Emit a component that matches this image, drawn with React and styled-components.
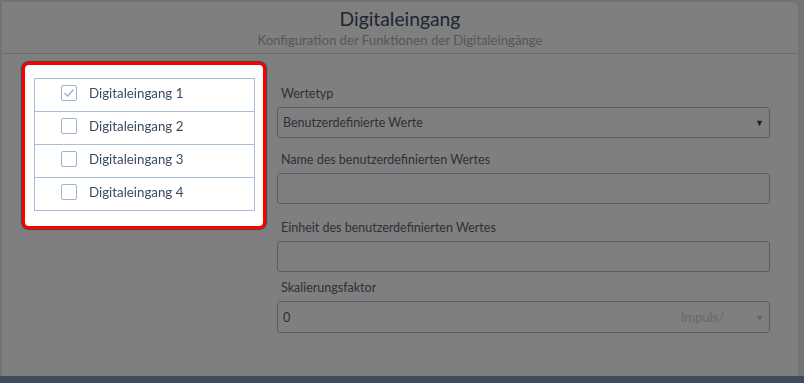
import styled, { createGlobalStyle } from "styled-components"

const GlobalStyle = createGlobalStyle`
    html, body {
        margin: 0;
        padding: 0;
        background: #e6e6e6;
        font-family: Lato, "Open Sans", sans-serif;
    }
    * { box-sizing: border-box; }
`

const inputs = [
    { label: "Digitaleingang 1", checked: true },
    { label: "Digitaleingang 2", checked: false },
    { label: "Digitaleingang 3", checked: false },
    { label: "Digitaleingang 4", checked: false },
]

const Check = () => (
    <svg width="12" height="10" viewBox="0 0 12 10">
        <path d="M1.5 5.2 L4.6 8.2 L10.5 1.6" fill="none" stroke="#8ba6c9" strokeWidth="1.2" />
    </svg>
)

const App = () => {
    return (
        <>
            <GlobalStyle />
            <Page>
                <Frame>
                    <Panel>
                        <Header>
                            <Title>Digitaleingang</Title>
                            <Subtitle>Konfiguration der Funktionen der Digitaleingänge</Subtitle>
                        </Header>
                        <Body>
                            <Highlight>
                                <List>
                                    {inputs.map((item) => (
                                        <Row key={item.label}>
                                            <Box>{item.checked && <Check />}</Box>
                                            <RowLabel>{item.label}</RowLabel>
                                        </Row>
                                    ))}
                                </List>
                            </Highlight>
                            <Form>
                                <Field space={13}>
                                    <Label>Wertetyp</Label>
                                    <Select>
                                        <span>Benutzerdefinierte Werte</span>
                                        <Arrow>▼</Arrow>
                                    </Select>
                                </Field>
                                <Field space={15}>
                                    <Label>Name des benutzerdefinierten Wertes</Label>
                                    <Input />
                                </Field>
                                <Field space={7}>
                                    <Label>Einheit des benutzerdefinierten Wertes</Label>
                                    <Input />
                                </Field>
                                <Field space={0}>
                                    <Label>Skalierungsfaktor</Label>
                                    <Select tall>
                                        <span>0</span>
                                        <Unit>
                                            <UnitText>Impuls/</UnitText>
                                            <Arrow light>▼</Arrow>
                                        </Unit>
                                    </Select>
                                </Field>
                            </Form>
                        </Body>
                    </Panel>
                </Frame>
                <Footer />
                <Overlay />
            </Page>
        </>
    )
}

export default App

const Page = styled.div`
    height: 383px;
    display: flex;
    flex-direction: column;
    overflow: hidden;
`

const Frame = styled.div`
    flex: 1;
    padding: 2px 6px 0 2px;
    display: flex;
`

const Panel = styled.div`
    flex: 1;
    background: #ffffff;
    border-radius: 0 6px 0 0;
    display: flex;
    flex-direction: column;
`

const Header = styled.div`
    height: 52px;
    border-bottom: 1px solid #d8d8d8;
    padding-top: 6px;
    text-align: center;
`

const Title = styled.div`
    font-size: 19.3px;
    line-height: 22px;
    color: #3d4f66;
`

const Subtitle = styled.div`
    margin-top: 2px;
    font-size: 13.2px;
    line-height: 16px;
    color: #a8aeb6;
`

const Body = styled.div`
    display: flex;
    align-items: flex-start;
    gap: 11px;
    padding: 8px 28px 0 20px;
`

const Highlight = styled.div`
    position: relative;
    z-index: 20;
    width: 244px;
    flex-shrink: 0;
    background: #ffffff;
    border: 3px solid #ff0000;
    border-radius: 7px;
    box-shadow: 0 0 1px 1px rgba(60, 0, 0, 0.55);
    padding: 13px 8px 15px 9px;
`

const List = styled.div`
    border: 1px solid #a8bdd6;
    border-bottom: none;
`

const Row = styled.div`
    height: 33px;
    border-bottom: 1px solid #a8bdd6;
    display: flex;
    align-items: center;
    padding: 0 0 4px 26px;
`

const Box = styled.div`
    width: 16px;
    height: 16px;
    border: 1px solid #9db3cf;
    border-radius: 2px;
    display: flex;
    align-items: center;
    justify-content: center;
`

const RowLabel = styled.span`
    margin-left: 12px;
    font-size: 13.3px;
    color: #3b4a5e;
`

const Form = styled.div`
    flex: 1;
    margin-top: 23px;
    display: flex;
    flex-direction: column;
`

const Field = styled.div`
    margin-bottom: ${({space}) => space}px;
`

const Label = styled.div`
    font-size: 12.5px;
    line-height: 18px;
    color: #5a6472;
    margin-bottom: 4px;
    padding-left: 4px;
`

const Input = styled.div`
    height: 31px;
    border: 1px solid #a8bdd6;
    border-radius: 3px;
    background: #ffffff;
`

const Select = styled.div`
    height: ${({tall}) => (tall ? "32px" : "31px")};
    border: 1px solid #a8bdd6;
    border-radius: 3px;
    display: flex;
    align-items: center;
    justify-content: space-between;
    padding: 0 5px 0 5px;
    font-size: 12.5px;
    color: #5a6472;
`

const Arrow = styled.span`
    font-size: 9px;
    color: ${({light}) => (light ? "#bccadd" : "#3a4452")};
`

const Unit = styled.span`
    display: flex;
    align-items: center;
    gap: 31px;
`

const UnitText = styled.span`
    font-size: 13px;
    color: #ccd1d8;
`

const Footer = styled.div`
    height: 7px;
    background: #7a96bc;
`

const Overlay = styled.div`
    position: fixed;
    inset: 0;
    z-index: 10;
    background: rgba(0, 0, 0, 0.5);
`
